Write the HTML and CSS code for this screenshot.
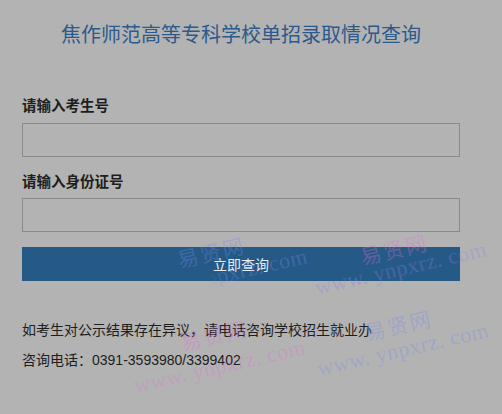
FILE: index.html
```html
<!DOCTYPE html>
<html lang="zh-CN">
<head>
<meta charset="utf-8">
<title>焦作师范高等专科学校单招录取情况查询</title>
<link rel="stylesheet" href="styles.css">
</head>
<body>
<div class="page">
  <h1 class="title">焦作师范高等专科学校单招录取情况查询</h1>
  <form class="form">
    <label class="label" for="ksh">请输入考生号</label>
    <input class="field" id="ksh" type="text">
    <label class="label second" for="sfz">请输入身份证号</label>
    <input class="field" id="sfz" type="text">
    <button class="btn" type="button">立即查询</button>
  </form>
  <div class="notes">
    <p class="note">如考生对公示结果存在异议，请电话咨询学校招生就业办</p>
    <p class="note">咨询电话：0391-3593980/3399402</p>
  </div>
</div>
<div class="wm wm-cn blue" style="left:180px;top:248px">易贤网</div>
<div class="wm wm-en blue masked" style="left:139px;top:284px">www. ynpxrz. com</div>
<div class="wm wm-cn pink" style="left:363px;top:245px">易贤网</div>
<div class="wm wm-en mixed" style="left:318px;top:277px">www. ynpxrz. com</div>
<div class="wm wm-cn pink" style="left:183px;top:331px">易贤网</div>
<div class="wm wm-en pink" style="left:137px;top:375px">www. ynpxrz. com</div>
<div class="wm wm-cn blue" style="left:367px;top:321px">易贤网</div>
<div class="wm wm-en blue" style="left:320px;top:358px">www. ynpxrz. com</div>
</body>
</html>
```
FILE: styles.css
```css
html, body {
  margin: 0;
  padding: 0;
  background: #b3b3b3;
  width: 502px;
  height: 414px;
  overflow: hidden;
}
body {
  position: relative;
  font-family: "Liberation Sans", "Noto Sans CJK SC", sans-serif;
  color: #1e1e1e;
}
.page {
  width: 438px;
  padding: 22px 0 0 22px;
}
.title {
  margin: 0;
  font-size: 20px;
  line-height: 26px;
  font-weight: normal;
  color: #2b5a8c;
  text-align: center;
}
.form {
  display: flex;
  flex-direction: column;
  margin-top: 48px;
}
.label {
  display: block;
  font-size: 14.5px;
  font-weight: bold;
  line-height: 20px;
  margin-bottom: 7px;
  color: #1e1e1e;
}
.label.second {
  margin-top: 15px;
  margin-bottom: 6px;
}
.field {
  box-sizing: border-box;
  width: 438px;
  height: 34px;
  margin: 0;
  border: 1px solid #8a8a8a;
  background: #b3b3b3;
  outline: none;
}
.btn {
  box-sizing: border-box;
  width: 438px;
  height: 34px;
  margin-top: 15px;
  border: 0;
  background: #255a86;
  color: #e6ecf2;
  font-family: "Liberation Sans", "Noto Sans CJK SC", sans-serif;
  font-size: 14px;
  padding: 0;
}
.notes {
  margin-top: 34px;
}
.note {
  margin: 0;
  font-size: 14px;
  line-height: 30px;
  color: #1e1e1e;
}
.wm {
  position: absolute;
  white-space: nowrap;
  line-height: 22px;
  transform: rotate(-13deg);
  transform-origin: left bottom;
  pointer-events: none;
}
.wm-cn {
  font-family: "Noto Sans CJK SC", sans-serif;
  font-size: 21px;
  letter-spacing: 2px;
}
.wm-en {
  font-family: "Liberation Serif", serif;
  font-size: 22px;
  letter-spacing: 0.5px;
}
.blue { color: rgba(120, 135, 235, 0.32); }
.pink { color: rgba(225, 110, 215, 0.32); }
.mixed {
  color: rgba(150, 125, 230, 0.32);
}
.masked {
  -webkit-mask-image: linear-gradient(to right, transparent 42%, #000 52%);
  mask-image: linear-gradient(to right, transparent 42%, #000 52%);
}
```
